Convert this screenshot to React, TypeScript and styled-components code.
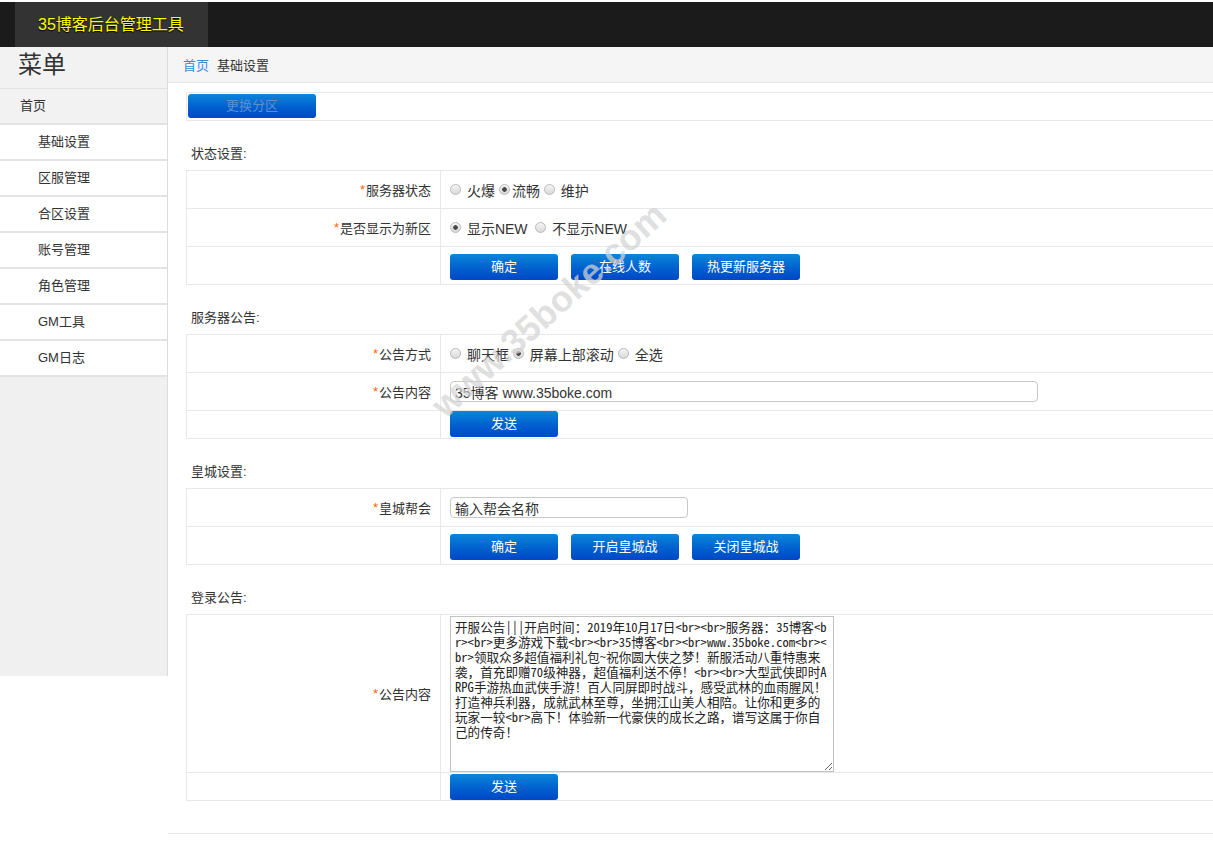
import React from 'react';
import styled, { createGlobalStyle } from 'styled-components';

const FONT = `"Liberation Sans", "Noto Sans CJK SC", sans-serif`;

const GlobalStyle = createGlobalStyle`
  html, body { margin: 0; padding: 0; background: #fff; }
  body {
    font-family: ${FONT};
    font-size: 13px;
    color: #333;
    overflow-x: hidden;
  }
`;

const Page = styled.div`
  position: relative;
  padding-top: 2px;
`;

const TopBar = styled.header`
  height: 45px;
  background: #1b1b1b;
  display: flex;
  padding-left: 15px;
`;

const Brand = styled.div`
  background: #333;
  color: #ffff00;
  font-size: 16px;
  height: 45px;
  line-height: 46px;
  padding: 0 24px 0 23px;
  text-shadow: 0 1px 1px #000;
`;

const Body = styled.div`
  display: flex;
  align-items: flex-start;
`;

const Side = styled.aside`
  width: 167px;
  height: 629px;
  flex-shrink: 0;
  background: #f0f0f0;
  border-right: 1px solid #dcdcdc;
`;

const SideTitle = styled.div`
  height: 41px;
  line-height: 36px;
  padding-left: 18px;
  font-size: 24px;
  color: #333;
  background: #f2f2f2;
  border-bottom: 1px solid #e2e2e2;
`;

const SideItem = styled.div<{ $top?: boolean }>`
  height: 34px;
  line-height: 34px;
  padding-left: ${p => (p.$top ? 20 : 38)}px;
  background: ${p => (p.$top ? '#f2f2f2' : '#fff')};
  border-bottom: 2px solid #e3e3e3;
  font-size: 13px;
  color: #333;
`;

const Main = styled.main`
  flex: 1;
  min-width: 0;
`;

const Crumbs = styled.div`
  height: 35px;
  background: #f5f5f5;
  border-bottom: 1px solid #e5e5e5;
  padding-left: 15px;
  display: flex;
  align-items: center;
  gap: 8px;
  font-size: 13px;
`;

const CrumbLink = styled.a`
  color: #3b8bd4;
  text-decoration: none;
`;

const Content = styled.div`
  padding: 9px 0 0 18px;
`;

const Toolbar = styled.div`
  height: 24px;
  padding: 1px 2px 2px 1px;
  border: 1px solid #e8e8e8;
  border-right: none;
  display: flex;
`;

const Button = styled.button<{ $w?: number; $h?: number; $faded?: boolean }>`
  width: ${p => p.$w ?? 108}px;
  height: ${p => p.$h ?? 26}px;
  flex-shrink: 0;
  padding: 0;
  border: none;
  border-radius: 3px;
  background: linear-gradient(to bottom, #0a86d9 0%, #0060cf 55%, #0047c6 100%);
  color: ${p => (p.$faded ? '#5f8fd2' : '#fff')};
  font-family: ${FONT};
  font-size: 13px;
  line-height: ${p => p.$h ?? 26}px;
  text-align: center;
  cursor: pointer;
`;

const SectionTitle = styled.div`
  height: 49px;
  box-sizing: border-box;
  padding: 24px 0 0 5px;
  line-height: 17px;
  font-size: 13px;
  color: #333;
  overflow: hidden;
`;

const FormTable = styled.div`
  border-top: 1px solid #e8e8e8;
  border-left: 1px solid #e8e8e8;
`;

const FormRow = styled.div<{ $h?: number }>`
  display: grid;
  grid-template-columns: 254px 1fr;
  height: ${p => p.$h ?? 38}px;
  border-bottom: 1px solid #e8e8e8;
  box-sizing: border-box;
`;

const LabelCell = styled.div`
  border-right: 1px solid #e8e8e8;
  display: flex;
  align-items: center;
  justify-content: flex-end;
  padding-right: 9px;
  font-size: 13px;
  color: #333;
`;

const Star = styled.span`
  color: #f60;
  margin-right: 1px;
`;

const ValueCell = styled.div<{ $pad?: number }>`
  display: flex;
  align-items: ${p => (p.$pad !== undefined ? 'flex-start' : 'center')};
  padding: ${p => p.$pad ?? 0}px 0 0 9px;
  gap: 13px;
  font-size: 14px;
  color: #333;
  white-space: pre;
`;

const Choice = styled.label`
  display: inline-flex;
  align-items: center;
`;

const Radio = styled.input.attrs({ type: 'radio' })`
  appearance: none;
  width: 11px;
  height: 11px;
  margin: 0 2px 0 4px;
  border-radius: 50%;
  border: 1px solid #b9b9b9;
  box-sizing: border-box;
  background: linear-gradient(to bottom, #f6f6f6, #d8d8d8);
  &:checked {
    background: radial-gradient(circle, #4a4a4a 0 2px, transparent 2.6px),
      linear-gradient(to bottom, #f6f6f6, #d8d8d8);
  }
`;

const ChoiceGroup = styled.div`
  display: flex;
  align-items: center;
  height: 20px;
  & > label:first-child input { margin-left: 0; }
`;

const TextInput = styled.input<{ $w: number }>`
  width: ${p => p.$w}px;
  height: 21px;
  box-sizing: border-box;
  border: 1px solid #c8c8c8;
  border-radius: 4px;
  padding: 0 4px;
  font-family: ${FONT};
  font-size: 14px;
  color: #333;
`;

const NoticeArea = styled.textarea`
  width: 384px;
  height: 156px;
  box-sizing: border-box;
  margin: 1px 0 0;
  border: 1px solid #c2c2c2;
  padding: 2px 5px 0 4px;
  font-family: "Noto Sans Mono CJK SC", "Liberation Mono", monospace;
  font-size: 12.6px;
  line-height: 15px;
  color: #222;
  word-break: break-all;
  white-space: pre-wrap;
`;

const FooterRule = styled.div`
  margin-top: 32px;
  border-top: 1px solid #e5e5e5;
  height: 28px;
`;

const Watermark = styled.div`
  position: absolute;
  left: 394px;
  top: 290px;
  width: 310px;
  text-align: center;
  font-family: "Liberation Sans", sans-serif;
  font-weight: bold;
  font-size: 36px;
  line-height: 40px;
  color: rgba(212, 212, 212, 0.72);
  transform: rotate(-42deg);
  pointer-events: none;
  white-space: nowrap;
`;

const menu = ['基础设置', '区服管理', '合区设置', '账号管理', '角色管理', 'GM工具', 'GM日志'];

const notice =
  '开服公告|||开启时间：2019年10月17日<br><br>服务器：35博客<br><br>更多游戏下载<br><br>35博客<br><br>www.35boke.com<br><br>领取众多超值福利礼包~祝你圆大侠之梦！新服活动八重特惠来袭，首充即赠70级神器，超值福利送不停！<br><br>大型武侠即时ARPG手游热血武侠手游！百人同屏即时战斗，感受武林的血雨腥风！打造神兵利器，成就武林至尊，坐拥江山美人相陪。让你和更多的玩家一较<br>高下！体验新一代豪侠的成长之路，谱写这属于你自己的传奇！';

const Label = ({ text }: { text: string }) => (
  <LabelCell>
    <Star>*</Star>
    {text}
  </LabelCell>
);

const App = () => {
  return (
    <Page>
      <GlobalStyle />
      <TopBar>
        <Brand>35博客后台管理工具</Brand>
      </TopBar>
      <Body>
        <Side>
          <SideTitle>菜单</SideTitle>
          <SideItem $top>首页</SideItem>
          {menu.map(m => (
            <SideItem key={m}>{m}</SideItem>
          ))}
        </Side>
        <Main>
          <Crumbs>
            <CrumbLink href="#">首页</CrumbLink>
            <span>基础设置</span>
          </Crumbs>
          <Content>
            <Toolbar>
              <Button $w={128} $h={24} $faded>更换分区</Button>
            </Toolbar>

            <SectionTitle>状态设置:</SectionTitle>
            <FormTable>
              <FormRow>
                <Label text="服务器状态" />
                <ValueCell>
                  <ChoiceGroup>
                    <Choice><Radio name="state" /> 火爆</Choice>
                    <Choice><Radio name="state" defaultChecked />流畅</Choice>
                    <Choice><Radio name="state" /> 维护</Choice>
                  </ChoiceGroup>
                </ValueCell>
              </FormRow>
              <FormRow>
                <Label text="是否显示为新区" />
                <ValueCell>
                  <ChoiceGroup>
                    <Choice><Radio name="isnew" defaultChecked /> 显示NEW </Choice>
                    <Choice><Radio name="isnew" /> 不显示NEW</Choice>
                  </ChoiceGroup>
                </ValueCell>
              </FormRow>
              <FormRow>
                <LabelCell />
                <ValueCell $pad={7}>
                  <Button>确定</Button>
                  <Button>在线人数</Button>
                  <Button>热更新服务器</Button>
                </ValueCell>
              </FormRow>
            </FormTable>

            <SectionTitle>服务器公告:</SectionTitle>
            <FormTable>
              <FormRow>
                <Label text="公告方式" />
                <ValueCell>
                  <ChoiceGroup>
                    <Choice><Radio name="way" /> 聊天框</Choice>
                    <Choice><Radio name="way" defaultChecked /> 屏幕上部滚动</Choice>
                    <Choice><Radio name="way" /> 全选</Choice>
                  </ChoiceGroup>
                </ValueCell>
              </FormRow>
              <FormRow>
                <Label text="公告内容" />
                <ValueCell>
                  <TextInput $w={588} defaultValue="35博客 www.35boke.com" />
                </ValueCell>
              </FormRow>
              <FormRow $h={28}>
                <LabelCell />
                <ValueCell $pad={0}>
                  <Button>发送</Button>
                </ValueCell>
              </FormRow>
            </FormTable>

            <SectionTitle>皇城设置:</SectionTitle>
            <FormTable>
              <FormRow>
                <Label text="皇城帮会" />
                <ValueCell>
                  <TextInput $w={238} defaultValue="输入帮会名称" />
                </ValueCell>
              </FormRow>
              <FormRow>
                <LabelCell />
                <ValueCell $pad={7}>
                  <Button>确定</Button>
                  <Button>开启皇城战</Button>
                  <Button>关闭皇城战</Button>
                </ValueCell>
              </FormRow>
            </FormTable>

            <SectionTitle>登录公告:</SectionTitle>
            <FormTable>
              <FormRow $h={158}>
                <Label text="公告内容" />
                <ValueCell $pad={0}>
                  <NoticeArea spellCheck={false} defaultValue={notice} />
                </ValueCell>
              </FormRow>
              <FormRow $h={28}>
                <LabelCell />
                <ValueCell $pad={1}>
                  <Button>发送</Button>
                </ValueCell>
              </FormRow>
            </FormTable>
          </Content>
          <FooterRule />
        </Main>
      </Body>
      <Watermark>www.35boke.com</Watermark>
    </Page>
  );
};

export default App;
